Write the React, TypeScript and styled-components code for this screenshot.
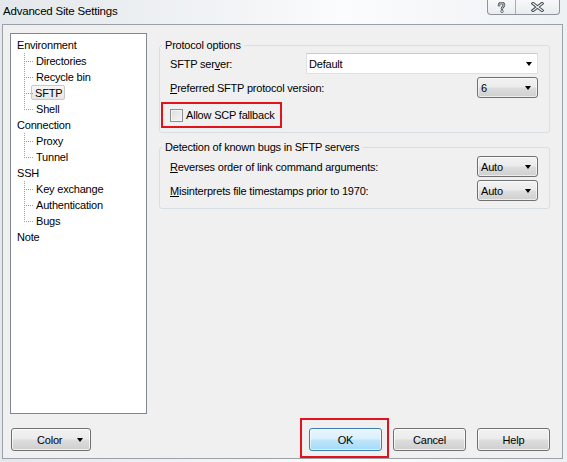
import React from 'react';
import styled, { createGlobalStyle, css } from 'styled-components';

const Global = createGlobalStyle`
  html, body { margin: 0; padding: 0; background: #fff; }
  body { font-family: "Liberation Sans", Arial, sans-serif; font-size: 11px; letter-spacing: -0.2px; color: #000; }
  * { box-sizing: border-box; }
`;

const Window = styled.div`
  width: 567px;
  height: 462px;
  display: flex;
  flex-direction: column;
  background: linear-gradient(90deg, #e4e8ec 0%, #f3f5f7 45%, #fbfcfd 60%, #eef1f4 100%);
`;

const TitleBar = styled.div`
  height: 24px;
  display: flex;
  align-items: flex-start;
  padding-left: 3px;
`;

const Title = styled.div`
  margin-top: 4px;
  font-size: 11.5px;
  line-height: 14px;
  color: #000;
`;

const CaptionButtons = styled.div`
  margin-left: auto;
  margin-right: 7px;
  display: flex;
  height: 15px;
  border: 1px solid #8d939a;
  border-top: none;
  border-radius: 0 0 4px 4px;
  background: linear-gradient(#f7f8f9, #e9ecef);
  overflow: hidden;
`;

const CaptionButton = styled.div<{ $w: number; $sep?: boolean }>`
  width: ${p => p.$w}px;
  display: flex;
  align-items: center;
  justify-content: center;
  ${p => p.$sep && css`border-right: 1px solid #a7adb3;`}
`;

const Client = styled.div`
  flex: 1;
  margin: 0 4px 3px 2px;
  border: 1px solid #9ba1a8;
  background: #f0f0f0;
  display: flex;
  flex-direction: column;
`;

const Main = styled.div`
  flex: 1;
  display: flex;
  padding: 8px 12px 0 7px;
  min-height: 0;
`;

const Tree = styled.div`
  width: 137px;
  height: 381px;
  background: #fff;
  border: 1px solid #828790;
  padding: 3px 0 0 0;
`;

const RootRow = styled.div`
  height: 16px;
  line-height: 16px;
  padding-left: 5px;
  white-space: nowrap;
`;

const ChildRow = styled.div<{ $last?: boolean }>`
  position: relative;
  height: 16px;
  line-height: 16px;
  padding-left: 24px;
  white-space: nowrap;
  &::before {
    content: '';
    position: absolute;
    left: 13px;
    top: 0;
    width: 1px;
    height: ${p => (p.$last ? '8px' : '16px')};
    background: repeating-linear-gradient(to bottom, #a0a0a0 0 1px, transparent 1px 2px);
  }
  &::after {
    content: '';
    position: absolute;
    left: 13px;
    top: 8px;
    width: 9px;
    height: 1px;
    background: repeating-linear-gradient(to right, #a0a0a0 0 1px, transparent 1px 2px);
  }
`;

const ItemLabel = styled.span<{ $selected?: boolean }>`
  display: inline-block;
  height: 16px;
  line-height: 14px;
  padding: 0 2px 0 0;
  border: 1px solid transparent;
  ${p => p.$selected && css`
    margin-left: -4px;
    padding: 0 2px 0 3px;
    height: 15px;
    border-color: #c8c8c8;
    border-radius: 2px;
    background: linear-gradient(#f7f7f7, #e6e6e6);
  `}
`;

const RightPanel = styled.div`
  flex: 1;
  margin-left: 12px;
  padding-top: 5px;
  display: flex;
  flex-direction: column;
  gap: 7px;
`;

const Group = styled.fieldset`
  margin: 0;
  padding: 0;
  border: 1px solid #d5dfe5;
  border-radius: 3px;
  min-width: 0;
`;

const Legend = styled.legend`
  margin-left: 2px;
  padding: 0 3px;
  line-height: 14px;
  height: 14px;
`;

const GroupBody = styled.div<{ $pt: number }>`
  display: flex;
  flex-direction: column;
  gap: 3px;
  padding: ${p => p.$pt}px 11px 7px 10px;
`;

const Row = styled.div`
  display: flex;
  align-items: center;
  height: 21px;
`;

const Label = styled.div`
  flex: 1;
  padding-top: 1px;
  white-space: nowrap;
  u { text-decoration: underline; text-underline-offset: 1px; }
`;

const Arrow = styled.span`
  width: 0;
  height: 0;
  border-left: 3.5px solid transparent;
  border-right: 3.5px solid transparent;
  border-top: 4px solid #000;
  margin-top: 1px;
`;

const EditCombo = styled.div`
  width: 232px;
  height: 21px;
  display: flex;
  align-items: center;
  padding: 0 5px 0 2px;
  background: #fff;
  border: 1px solid #dde1e6;
  border-top-color: #c8ccd2;
  justify-content: space-between;
`;

const ButtonCombo = styled.div`
  width: 61px;
  height: 21px;
  display: flex;
  align-items: center;
  justify-content: space-between;
  padding: 0 6px 0 3px;
  border: 1px solid #707070;
  border-radius: 3px;
  background: linear-gradient(#f2f2f2 0%, #ebebeb 48%, #dddddd 52%, #cfcfcf 100%);
  box-shadow: inset 0 0 0 1px rgba(255, 255, 255, 0.6);
`;

const Highlight = styled.div<{ $l: number; $t: number; $r: number; $b: number }>`
  position: relative;
  display: inline-flex;
  align-items: center;
  &::after {
    content: '';
    position: absolute;
    left: ${p => p.$l}px;
    top: ${p => p.$t}px;
    right: ${p => p.$r}px;
    bottom: ${p => p.$b}px;
    border: 2px solid #e3131c;
    pointer-events: none;
  }
`;

const CheckRow = styled.div`
  height: 21px;
  margin-top: 3px;
  display: flex;
  align-items: center;
`;

const CheckBox = styled.span`
  width: 13px;
  height: 13px;
  border: 1px solid #8e8f8f;
  background: linear-gradient(135deg, #dcdcdc, #f6f6f6);
  box-shadow: inset 0 0 0 1px #f4f4f4;
  margin-right: 3px;
  margin-top: 1px;
`;

const Footer = styled.div`
  display: flex;
  align-items: center;
  padding: 14px 12px 7px 8px;
  gap: 11px;
`;

const Button = styled.div<{ $w?: number; $default?: boolean }>`
  width: ${p => p.$w ?? 73}px;
  height: 23px;
  display: flex;
  align-items: center;
  justify-content: center;
  border: 1px solid #707070;
  border-radius: 3px;
  background: linear-gradient(#f2f2f2 0%, #ebebeb 48%, #dddddd 52%, #cfcfcf 100%);
  box-shadow: inset 0 0 0 1px rgba(255, 255, 255, 0.7);
  ${p => p.$default && css`
    border-color: #3c7fb1;
    background: linear-gradient(#eaf6fd 0%, #d9f0fc 48%, #bee6fd 52%, #a7d9f5 100%);
    box-shadow: inset 0 0 0 1px rgba(255, 255, 255, 0.6);
  `}
`;

const SplitButton = styled(Button)`
  justify-content: space-between;
  padding: 0 7px 0 25px;
`;

const Spacer = styled.div`
  flex: 1;
`;

const HelpGlyph = () => (
  <svg width="9" height="11" viewBox="0 0 9 11">
    <path d="M2 3.2 C2 1.6 3.2 1 4.5 1 C5.9 1 7 1.8 7 3.1 C7 4.6 5 4.8 5 6.6" fill="none" stroke="#4a5057" strokeWidth="2.6" strokeLinecap="round" />
    <path d="M2 3.2 C2 1.6 3.2 1 4.5 1 C5.9 1 7 1.8 7 3.1 C7 4.6 5 4.8 5 6.6" fill="none" stroke="#f3f4f5" strokeWidth="0.9" strokeLinecap="round" />
    <circle cx="5" cy="9.3" r="1.3" fill="#f3f4f5" stroke="#4a5057" strokeWidth="0.8" />
  </svg>
);

const CloseGlyph = () => (
  <svg width="13" height="10" viewBox="0 0 13 10">
    <path d="M2 1.5 L11 8.5 M11 1.5 L2 8.5" stroke="#4a5057" strokeWidth="3.2" strokeLinecap="square" />
    <path d="M2 1.5 L11 8.5 M11 1.5 L2 8.5" stroke="#f3f4f5" strokeWidth="1.2" strokeLinecap="square" />
  </svg>
);

type Node = { label: string; children: string[] };
const tree: Node[] = [
  { label: 'Environment', children: ['Directories', 'Recycle bin', 'SFTP', 'Shell'] },
  { label: 'Connection', children: ['Proxy', 'Tunnel'] },
  { label: 'SSH', children: ['Key exchange', 'Authentication', 'Bugs'] },
  { label: 'Note', children: [] },
];

export default function App() {
  return (
    <>
      <Global />
      <Window>
        <TitleBar>
          <Title>Advanced Site Settings</Title>
          <CaptionButtons>
            <CaptionButton $w={28} $sep><HelpGlyph /></CaptionButton>
            <CaptionButton $w={43}><CloseGlyph /></CaptionButton>
          </CaptionButtons>
        </TitleBar>
        <Client>
          <Main>
            <Tree>
              {tree.map(n => (
                <React.Fragment key={n.label}>
                  <RootRow><ItemLabel>{n.label}</ItemLabel></RootRow>
                  {n.children.map((c, i) => (
                    <ChildRow key={c} $last={i === n.children.length - 1}>
                      <ItemLabel $selected={c === 'SFTP'}>{c}</ItemLabel>
                    </ChildRow>
                  ))}
                </React.Fragment>
              ))}
            </Tree>
            <RightPanel>
              <Group>
                <Legend>Protocol options</Legend>
                <GroupBody $pt={1}>
                  <Row>
                    <Label>SFTP ser<u>v</u>er:</Label>
                    <EditCombo><span>Default</span><Arrow /></EditCombo>
                  </Row>
                  <Row>
                    <Label><u>P</u>referred SFTP protocol version:</Label>
                    <ButtonCombo><span>6</span><Arrow /></ButtonCombo>
                  </Row>
                  <CheckRow>
                    <Highlight $l={-9} $t={-6} $r={-7} $b={-6}>
                      <CheckBox />
                      <span>Allow SCP fallback</span>
                    </Highlight>
                  </CheckRow>
                </GroupBody>
              </Group>
              <Group>
                <Legend>Detection of known bugs in SFTP servers</Legend>
                <GroupBody $pt={2}>
                  <Row>
                    <Label><u>R</u>everses order of link command arguments:</Label>
                    <ButtonCombo><span>Auto</span><Arrow /></ButtonCombo>
                  </Row>
                  <Row>
                    <Label><u>M</u>isinterprets file timestamps prior to 1970:</Label>
                    <ButtonCombo><span>Auto</span><Arrow /></ButtonCombo>
                  </Row>
                </GroupBody>
              </Group>
            </RightPanel>
          </Main>
          <Footer>
            <SplitButton $w={80}><span>Color</span><Arrow /></SplitButton>
            <Spacer />
            <Highlight $l={-9} $t={-10} $r={-7} $b={-7}>
              <Button $default>OK</Button>
            </Highlight>
            <Button>Cancel</Button>
            <Button>Help</Button>
          </Footer>
        </Client>
      </Window>
    </>
  );
}
